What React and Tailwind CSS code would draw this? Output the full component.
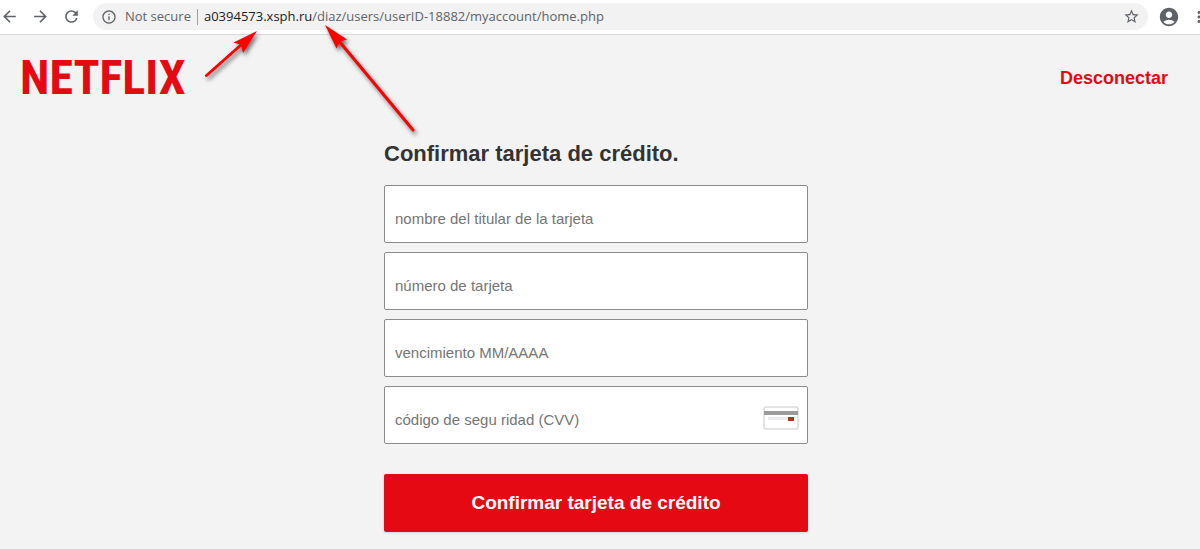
import React from 'react';
import { MdAccountCircle, MdArrowBack, MdArrowForward, MdInfoOutline, MdMoreVert, MdRefresh, MdStarBorder } from 'react-icons/md';

const fields = [
  { id: 'holder', label: 'nombre del titular de la tarjeta' },
  { id: 'number', label: 'número de tarjeta' },
  { id: 'expiry', label: 'vencimiento MM/AAAA' },
  { id: 'cvv', label: 'código de segu ridad (CVV)', hasCard: true },
];

const BrowserBar = () => (
  <div className="flex h-[35px] items-center overflow-hidden border-b border-[#d8d9db] bg-white pb-px text-[#5f6368]">
    <div className="flex shrink-0 items-center gap-3 pr-3">
      <button type="button" aria-label="Back">
        <MdArrowBack size={19} />
      </button>
      <button type="button" aria-label="Forward">
        <MdArrowForward size={19} />
      </button>
      <button type="button" aria-label="Reload">
        <MdRefresh size={19} />
      </button>
    </div>
    <div className="flex h-[27px] min-w-0 flex-1 items-center rounded-full bg-[#f2f2f2] px-2 font-['Open_Sans','Noto_Sans',sans-serif] text-[13px]">
      <MdInfoOutline size={16} className="shrink-0" />
      <span className="ml-2 whitespace-nowrap">Not secure</span>
      <span className="mx-[6px] h-4 w-px shrink-0 bg-[#9aa0a6]" />
      <span className="min-w-0 flex-1 truncate">
        <span className="text-[#202124]">a0394573.xsph.ru</span>
        /diaz/users/userID-18882/myaccount/home.php
      </span>
      <button type="button" aria-label="Bookmark" className="shrink-0">
        <MdStarBorder size={17} />
      </button>
    </div>
    <button type="button" aria-label="Profile" className="ml-[10px] shrink-0">
      <MdAccountCircle size={22} />
    </button>
    <button type="button" aria-label="Menu" className="-mr-2 ml-[10px] shrink-0">
      <MdMoreVert size={18} />
    </button>
  </div>
);

const CardIcon = () => (
  <svg width="36" height="24" viewBox="0 0 36 24" aria-hidden="true">
    <rect x="1" y="1" width="34" height="22" rx="2" fill="#fff" stroke="#dcdce0" strokeWidth="1.5" />
    <rect x="1" y="5" width="34" height="4" fill="#9b9b9b" />
    <rect x="5" y="11" width="20" height="3" fill="#ececf0" />
    <rect x="25" y="11" width="6" height="4" fill="#b3321b" />
  </svg>
);

// Red callout arrows that point at the address in the browser bar
const Arrows = () => (
  <svg
    className="pointer-events-none absolute top-0 left-0"
    width="440"
    height="150"
    viewBox="0 0 440 150"
    aria-hidden="true"
  >
    <g fill="#f00" stroke="#f00" style={{ filter: 'drop-shadow(2px 3px 2px rgba(0,0,0,.55))' }}>
      <path d="M206.500 75.500 L242 44" strokeWidth="3" strokeLinecap="round" />
      <path d="M257 31 L243 53 L241 45 L233.500 42.500 Z" stroke="none" />
      <path d="M413 130 L339 41" strokeWidth="3" strokeLinecap="round" />
      <path d="M325 25 L347 39.500 L340 41.500 L336.500 48.500 Z" stroke="none" />
    </g>
  </svg>
);

const App = () => {
  return (
    <div className="relative min-h-screen bg-[#f3f3f3] font-['Liberation_Sans',Arial,sans-serif]">
      <BrowserBar />

      <header className="flex items-center justify-between pt-4 pr-8 pl-5">
        <span className="font-['Roboto_Condensed','Open_Sans_Condensed','Noto_Sans_Condensed',Roboto,sans-serif] text-[48px] leading-[54px] font-bold text-[#e50914]">
          NETFLIX
        </span>
        <a href="#salir" className="text-[18px] font-bold text-[#e50914]">
          Desconectar
        </a>
      </header>

      <main className="pr-6 pl-4">
        <div className="mx-auto max-w-[424px] pt-[34px]">
          <h1 className="mb-4 text-[22px] leading-[30px] font-bold text-[#333]">Confirmar tarjeta de crédito.</h1>

          <div className="flex flex-col gap-[9px]">
            {fields.map(field => (
              <div key={field.id} className="relative">
                <input
                  id={field.id}
                  type="text"
                  aria-label={field.label}
                  placeholder={field.label}
                  autoComplete="off"
                  readOnly
                  className="block h-[58px] w-full rounded-[2px] border border-[#8c8c8c] bg-white px-[10px] pt-2 text-[15px] text-[#333] placeholder:text-[#757575]"
                />
                {field.hasCard && (
                  <span className="absolute top-5 right-[9px]">
                    <CardIcon />
                  </span>
                )}
              </div>
            ))}
          </div>

          <button
            type="button"
            className="mt-[30px] h-[58px] w-full rounded-[2px] bg-[#e50914] text-[19px] font-bold text-white shadow-sm"
          >
            Confirmar tarjeta de crédito
          </button>
        </div>
      </main>

      <Arrows />
    </div>
  );
};

export default App;
